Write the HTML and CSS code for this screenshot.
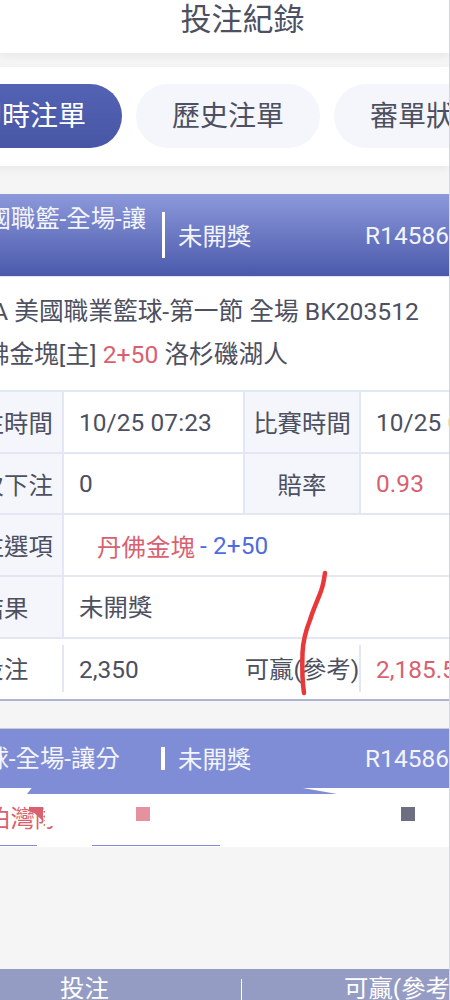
FILE: index.html
```html
<!DOCTYPE html>
<html lang="zh-Hant">
<head>
  <meta charset="UTF-8">
  <meta name="viewport" content="width=device-width, initial-scale=1.0">
  <title>投注紀錄</title>
  <link rel="stylesheet" href="styles.css">
</head>
<body>
  <div class="page">
    <header class="top-bar">投注紀錄</header>

    <nav class="tabs">
      <div class="tab tab-active">即時注單</div>
      <div class="tab">歷史注單</div>
      <div class="tab">審單狀態</div>
    </nav>

    <section class="bet-card">
      <div class="bet-head">
        <div class="bet-name">美國職籃-全場-讓</div>
        <div class="bet-divider"></div>
        <div class="bet-status">未開獎</div>
        <div class="bet-no">R14586</div>
      </div>
      <div class="match-info">
        <div class="match-league">NBA 美國職業籃球-第一節 全場 BK203512</div>
        <div class="match-teams">丹佛金塊[主] <span class="red">2+50</span> 洛杉磯湖人</div>
      </div>
      <div class="bet-table">
        <div class="cell-label">下注時間</div>
        <div class="cell-value">10/25 07:23</div>
        <div class="cell-label">比賽時間</div>
        <div class="cell-value">10/25 09:00</div>

        <div class="cell-label">本次下注</div>
        <div class="cell-value">0</div>
        <div class="cell-label">賠率</div>
        <div class="cell-value red">0.93</div>

        <div class="cell-label">投注選項</div>
        <div class="cell-value cell-wide cell-option"><span class="red">丹佛金塊</span> <span class="blue">- 2+50</span></div>

        <div class="cell-label">結果</div>
        <div class="cell-value cell-wide">未開獎</div>

        <div class="cell-plain">投注</div>
        <div class="cell-plain cell-num">2,350</div>
        <div class="cell-plain">可贏(參考)</div>
        <div class="cell-plain cell-num red">2,185.50</div>
      </div>
    </section>

    <section class="bet-card-next">
      <div class="next-head">
        <div class="bet-name next-name">籃球-全場-讓分</div>
        <div class="next-divider"></div>
        <div class="bet-status">未開獎</div>
        <div class="bet-no">R14586</div>
      </div>
      <div class="head-scrap"></div>
      <div class="next-body">
        <span class="red">泊灣隊</span>
        <i class="block block-cover"></i>
        <i class="block block-red"></i>
        <i class="block block-pink"></i>
        <i class="block block-gray"></i>
        <i class="edge edge-a"></i>
        <i class="edge edge-b"></i>
      </div>
    </section>

    <footer class="foot-bar">
      <div class="foot-left">投注</div>
      <div class="foot-right">可贏(參考)</div>
    </footer>

    <!-- hand drawn mark on top of the screenshot -->
    <svg class="scribble" width="40" height="130" viewBox="0 0 40 130">
      <path d="M30 5 C29 12 28 18 26 23 C22 34 18 42 15 52 C11 62 8 72 7.500 85 C7 100 7 112 9 125" fill="none" stroke="#e8383a" stroke-width="4.500" stroke-linecap="round"/>
    </svg>
  </div>
</body>
</html>
```

FILE: styles.css
```css
* {
  box-sizing: border-box;
}
body {
  margin: 0;
  padding: 0;
  background-color: #f5f5f5;
  font-family: Roboto, "Noto Sans CJK TC", sans-serif;
  font-size: 24.400px;
  color: #4d5060;
}
.page {
  position: relative;
  display: flex;
  flex-direction: column;
  width: 450px;
  height: 1000px;
  overflow: hidden;
  border-right: 1px solid #d5d6de;
}
.red {
  color: #d9616f;
}
.blue {
  color: #4f6be0;
}

.top-bar {
  height: 53px;
  padding-left: 36px;
  background-color: white;
  text-align: center;
  font-size: 31px;
  line-height: 40px;
  box-shadow: 0 3px 8px rgba(0, 0, 0, 0.06);
  flex: none;
}

.tabs {
  display: flex;
  gap: 14px;
  height: 99px;
  margin-top: 14px;
  margin-left: -62px;
  padding-top: 17px;
  background-color: white;
  box-shadow: 0 3px 8px rgba(0, 0, 0, 0.05);
  flex: none;
}
.tab {
  width: 184px;
  height: 64px;
  border-radius: 32px;
  background-color: #f5f6fb;
  text-align: center;
  font-size: 28px;
  line-height: 66px;
  white-space: nowrap;
  flex: none;
}
.tab-active {
  background: linear-gradient(#5362b2, #4757a6);
  color: white;
}

.bet-card {
  margin-top: 28px;
  height: 507px;
  background-color: white;
  border-bottom: 2px solid #adb3d2;
  flex: none;
}
.bet-head,
.next-head {
  display: flex;
  align-items: center;
  color: #f4f5fc;
  white-space: nowrap;
}
.bet-head {
  height: 83px;
  background: linear-gradient(#8c99db, #4a59ab);
  border-bottom: 1px solid #dfe2f2;
}
.bet-name {
  width: 200px;
  margin-left: -38px;
  margin-bottom: 32px;
  line-height: 34px;
  flex: none;
}
.bet-divider {
  width: 3px;
  height: 46px;
  margin-right: 13px;
  background-color: white;
  flex: none;
}
.bet-status {
  width: 187px;
  margin-bottom: 2px;
  flex: none;
}
.bet-no {
  letter-spacing: 0.100px;
  flex: none;
}

.match-info {
  height: 113px;
  padding-top: 13px;
  margin-left: -41px;
  font-size: 24.700px;
  line-height: 43px;
  white-space: nowrap;
}
.match-teams {
  margin-left: 1px;
}

.bet-table {
  display: grid;
  grid-template-columns: 120px 179px 118px 260px;
  grid-template-rows: 62px 61px 62px 62px 60px;
  margin-left: -56px;
  border-top: 2px solid #e3e6f3;
  white-space: nowrap;
}
.cell-label,
.cell-value {
  display: flex;
  align-items: center;
  border-bottom: 2px solid #e3e6f3;
}
.cell-label {
  justify-content: center;
  padding-bottom: 1px;
  background-color: #f5f6fb;
  border-left: 2px solid #e3e6f3;
  border-right: 2px solid #e3e6f3;
}
.cell-value {
  padding-left: 15px;
  letter-spacing: 0.100px;
}
.cell-wide {
  grid-column: 2 / 5;
  padding-bottom: 3px;
}
.cell-option {
  padding-left: 33px;
  padding-bottom: 0;
  gap: 5px;
}
.cell-plain {
  position: relative;
  display: flex;
  align-items: center;
  justify-content: center;
  padding-bottom: 3px;
}
.cell-num {
  justify-content: flex-start;
  padding-left: 15px;
  padding-bottom: 0;
}
.cell-num::before {
  content: "";
  position: absolute;
  left: -2px;
  top: 6px;
  bottom: 7px;
  width: 2px;
  background-color: #e3e6f3;
}

.bet-card-next {
  position: relative;
  margin-top: 27px;
  border-top: 1px solid #c9cbd8;
  flex: none;
}
.next-head {
  height: 59px;
  background-color: #7f8dd6;
}
.next-name {
  margin-left: -40px;
  margin-bottom: 0;
  width: 201px;
}
.next-divider {
  width: 4px;
  height: 23px;
  margin-right: 13px;
  background-color: white;
  flex: none;
}
.head-scrap {
  position: absolute;
  z-index: 1;
  left: 27px;
  top: 59px;
  width: 310px;
  height: 6px;
  background-color: #7f8dd6;
  clip-path: polygon(0 100%, 1.500% 0, 89% 0, 100% 100%);
}
.next-body {
  position: relative;
  height: 59px;
  margin-left: -14px;
  padding-top: 14px;
  background-color: white;
  line-height: 34px;
}
.block {
  position: absolute;
  top: 19px;
  width: 14px;
  height: 14px;
}
.block-cover {
  left: 59px;
  top: 12px;
  width: 20px;
  height: 26px;
  background-color: white;
}
.block-red {
  left: 43px;
  background-color: #d9616f;
  clip-path: polygon(0 0, 100% 0, 100% 100%, 40% 45%, 0 30%);
}
.block-pink {
  left: 150px;
  background-color: #e4939e;
}
.block-gray {
  left: 415px;
  background-color: #6c6f80;
}
.edge {
  position: absolute;
  bottom: 1px;
  height: 1px;
  background-color: #7f8dd6;
}
.edge-a {
  left: 14px;
  width: 37px;
}
.edge-b {
  left: 106px;
  width: 128px;
}

.foot-bar {
  display: flex;
  height: 31px;
  margin-top: auto;
  overflow: hidden;
  background-color: #959cc3;
  color: white;
  line-height: 40px;
  white-space: nowrap;
  flex: none;
}
.foot-left {
  width: 241px;
  padding-left: 60px;
  flex: none;
}
.foot-right {
  position: relative;
  padding-left: 103px;
  flex: none;
}
.foot-right::before {
  content: "";
  position: absolute;
  left: 0;
  top: 10px;
  bottom: 0;
  width: 1px;
  background-color: white;
}

.scribble {
  position: absolute;
  left: 295px;
  top: 568px;
}
```
